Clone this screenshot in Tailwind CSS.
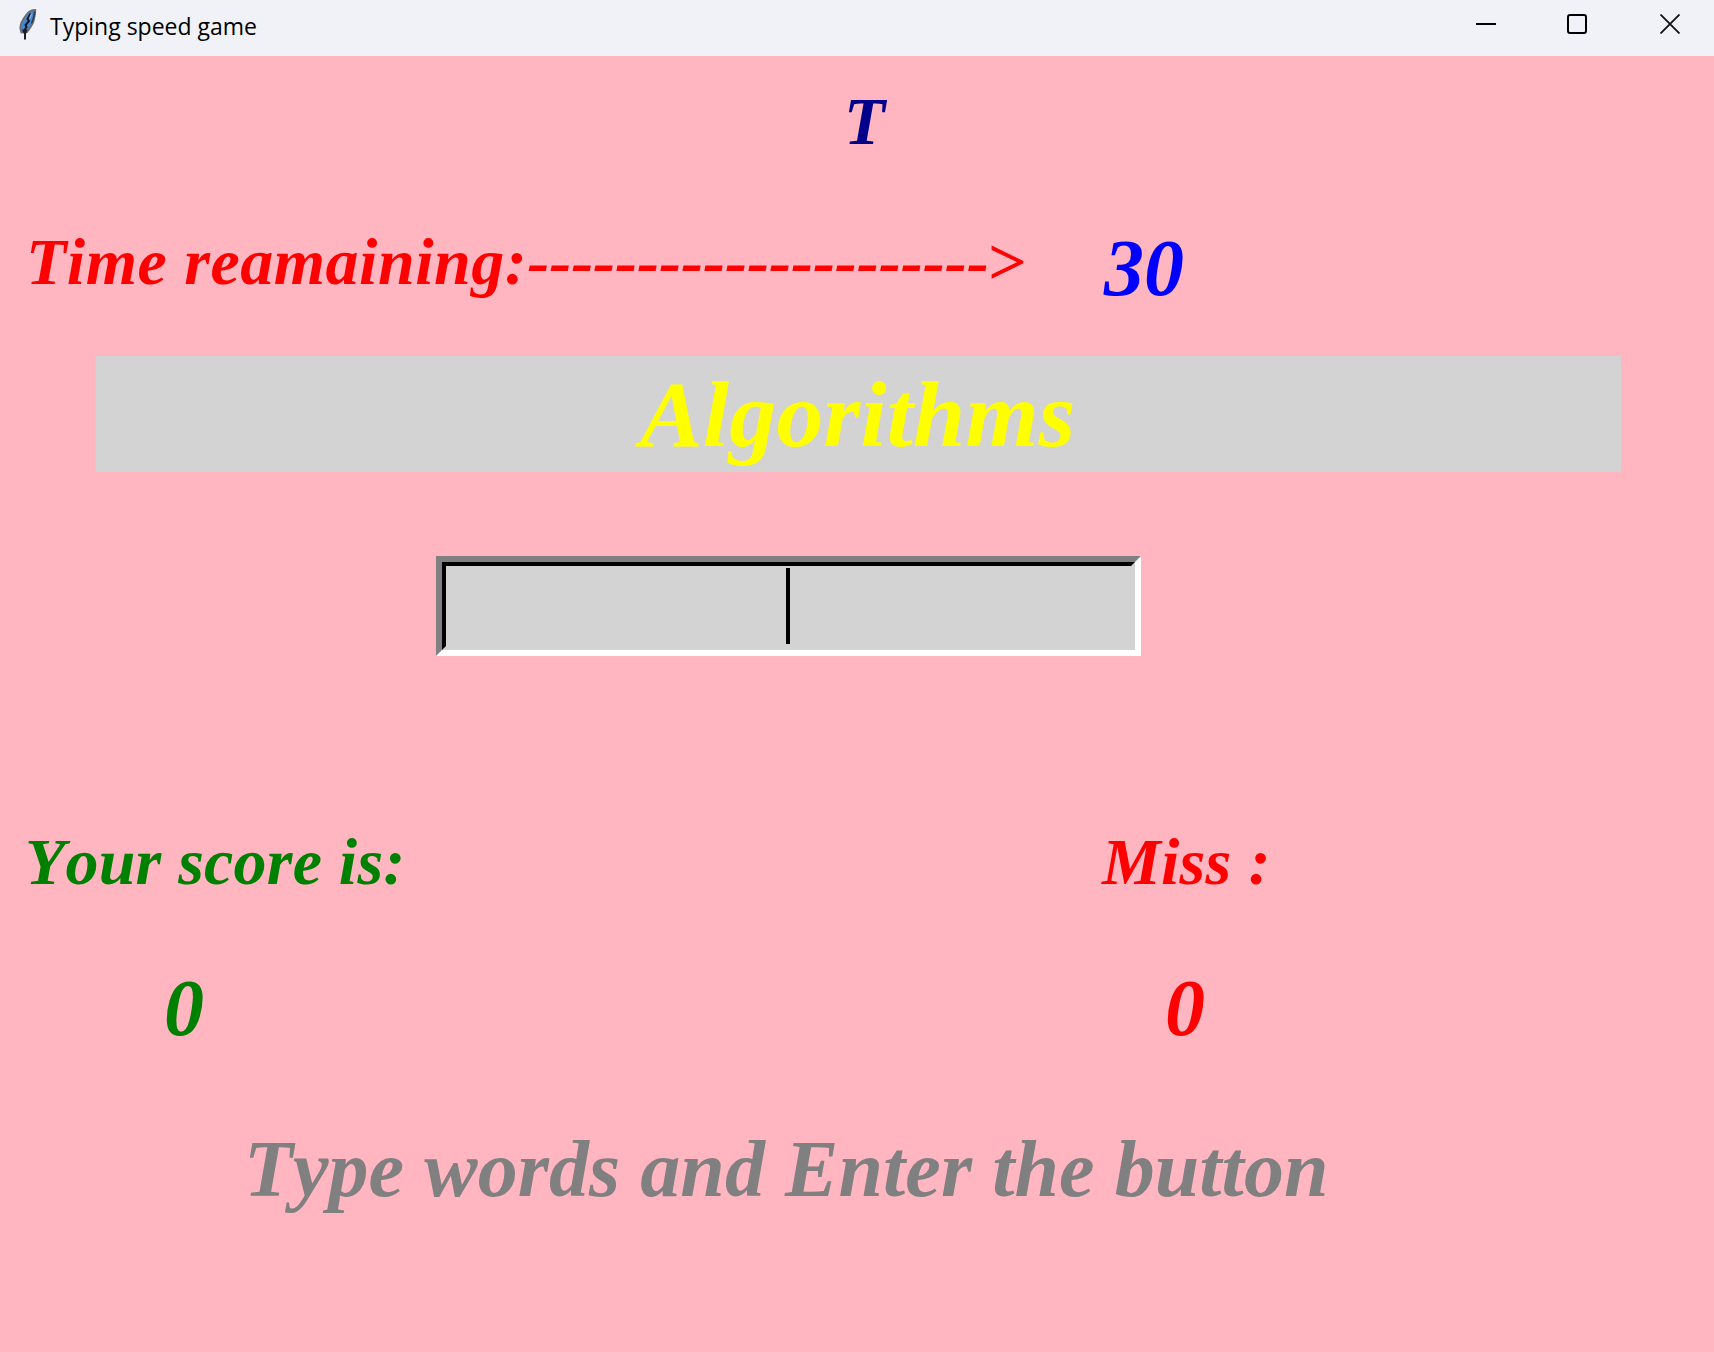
<!DOCTYPE html>
<html lang="en">
<head>
<meta charset="utf-8">
<title>Typing speed game</title>
<script src="https://cdn.jsdelivr.net/npm/@tailwindcss/browser@4"></script>
</head>
<body class="flex h-screen w-screen flex-col overflow-hidden bg-[#ffb6c1]">
  <header class="flex h-14 shrink-0 items-start bg-[#f0f2f8]">
    <svg class="ml-[18px] mt-2 h-[33px] w-5 shrink-0" viewBox="0 0 20 33" fill="none">
      <path d="M17.200 2C14 2 11 3.500 9 6C6.500 9 4.500 12 3.300 15C2.200 18 2 21 3.500 24.500L9 24C11.500 20.500 14.500 17 15.500 13C16.500 9 17.500 6 17.200 2Z" fill="#4a86cf" stroke="#6b6f76" stroke-width="2"/>
      <path d="M16.500 3.500C16.500 8 15 12 13.500 15.500" stroke="#33383f" stroke-width="1.500"/>
      <path d="M12.500 5.500L9.500 11L11 13L7.500 17L8.500 19L5.500 24" stroke="#101820" stroke-width="1.900"/>
      <path d="M13.500 6L11.500 11" stroke="#7fb2ea" stroke-width="1.500"/>
      <path d="M4 21.500H9.500L8 26V31.500H6V26Z" fill="#1c1f22"/>
    </svg>
    <span class="ml-3 mt-[9px] whitespace-nowrap font-['Open_Sans','Noto_Sans',sans-serif] text-[23px] leading-[34px] text-black">Typing speed game</span>
    <div class="ml-auto mr-[34px] mt-[14px] flex gap-[71px]">
      <svg class="h-5 w-5" viewBox="0 0 20 20"><path d="M0 10H20" stroke="#000" stroke-width="2"/></svg>
      <svg class="h-5 w-5" viewBox="0 0 20 20"><rect x="1" y="1" width="18" height="18" rx="2" fill="none" stroke="#000" stroke-width="2"/></svg>
      <svg class="ml-[2px] h-5 w-5" viewBox="0 0 20 20"><path d="M.5 .5L19.500 19.500M19.500 .5L.5 19.500" stroke="#111" stroke-width="1.800"/></svg>
    </div>
  </header>
  <main class="flex flex-1 flex-col whitespace-nowrap font-['Liberation_Serif',serif] font-bold italic [font-kerning:none]">
    <h1 class="ml-[844px] mt-[27px] text-[67px] leading-[76px] text-[#00008b]">T</h1>
    <div class="mt-16 flex h-[92px] items-start">
      <p class="ml-[26px] mt-px w-[1074px] text-[66px] leading-[76px] text-[#ff0000]"><span class="tracking-[0.5px]">Time reamaining:</span>---------------------<span class="font-normal not-italic [-webkit-text-stroke:1px_#ff0000]">&gt;</span></p>
      <p class="ml-[4px] text-[80px] leading-[91px] text-[#0000ff]">30</p>
    </div>
    <div class="ml-24 mt-[41px] h-[116px] w-[1525px] bg-[#d3d3d3] pl-[544px] text-[94px] leading-[116px] tracking-[0.2px] text-[#ffff00]">Algorithms</div>
    <div class="ml-[436px] mt-[84px] h-[100px] w-[705px] border-6 border-b-white border-l-[#808080] border-r-white border-t-[#808080] bg-[#d3d3d3]">
      <div class="h-full w-full border-4 border-b-[#d3d3d3] border-l-black border-r-[#d3d3d3] border-t-black pl-[340px] pt-[2px]">
        <div class="h-[76px] w-1 bg-black"></div>
      </div>
    </div>
    <div class="mt-[168px] flex h-[76px] text-[66px] leading-[76px]">
      <p class="ml-[25px] w-[1077px] tracking-[0.2px] text-[#008000]">Your score is:</p>
      <p class="tracking-[0.3px] text-[#ff0000]">Miss :</p>
    </div>
    <div class="mt-[63px] flex h-[92px] text-[80px] leading-[91px]">
      <p class="ml-[164px] w-[1001px] text-[#008000]">0</p>
      <p class="text-[#ff0000]">0</p>
    </div>
    <p class="ml-[244px] mt-[68px] text-[80px] leading-[92px] tracking-[0.07px] text-[#808080]">Type words and Enter the button</p>
  </main>
</body>
</html>
